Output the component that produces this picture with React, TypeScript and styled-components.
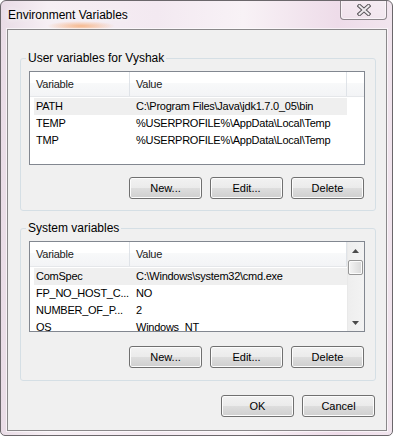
import styled, { createGlobalStyle } from "styled-components";

type VarRow = {
  name: string;
  value: string;
  selected?: boolean;
};

const userVars: VarRow[] = [
  { name: "PATH", value: "C:\\Program Files\\Java\\jdk1.7.0_05\\bin", selected: true },
  { name: "TEMP", value: "%USERPROFILE%\\AppData\\Local\\Temp" },
  { name: "TMP", value: "%USERPROFILE%\\AppData\\Local\\Temp" },
];

const systemVars: VarRow[] = [
  { name: "ComSpec", value: "C:\\Windows\\system32\\cmd.exe", selected: true },
  { name: "FP_NO_HOST_C...", value: "NO" },
  { name: "NUMBER_OF_P...", value: "2" },
  { name: "OS", value: "Windows_NT" },
];

const GlobalStyle = createGlobalStyle`
  html, body {
    margin: 0;
    padding: 0;
    background: #fff;
  }
  body {
    font-family: "Liberation Sans", Arial, sans-serif;
    font-size: 12px;
    color: #000;
  }
`;

const Window = styled.div`
  width: 393px;
  height: 436px;
  box-sizing: border-box;
  border: 1px solid #6b676b;
  border-radius: 6px 6px 5px 5px;
  display: flex;
  flex-direction: column;
  overflow: hidden;
  background:
    radial-gradient(ellipse 34px 5px at 80px 25px, rgba(247, 168, 108, 0.75), rgba(247, 168, 108, 0)),
    linear-gradient(to right, #e9dce6 0%, #f6eff4 12%, #f3e9f1 40%, #f8f2f6 62%, #eedce9 86%, #f1e5ee 100%);
`;

const TitleBar = styled.div`
  height: 28px;
  flex: none;
  display: flex;
  align-items: flex-start;
  padding: 0 5px 0 7px;
`;

const Title = styled.div`
  flex: 1;
  line-height: 28px;
  text-shadow: 0 0 6px rgba(255, 255, 255, 0.95), 0 0 10px rgba(255, 255, 255, 0.8);
`;

const CloseButton = styled.div`
  width: 47px;
  height: 20px;
  margin-top: -1px;
  box-sizing: border-box;
  border: 1px solid rgba(70, 66, 70, 0.6);
  border-top: none;
  border-radius: 0 0 4px 4px;
  box-shadow: inset 0 0 0 1px rgba(255, 255, 255, 0.55);
  background: linear-gradient(rgba(255, 255, 255, 0.35), rgba(255, 255, 255, 0.15));
  display: flex;
  align-items: center;
  justify-content: center;
`;

const Client = styled.div`
  flex: 1;
  margin: 0 5px 4px 6px;
  box-sizing: border-box;
  border: 1px solid #8a888a;
  box-shadow: 0 0 0 1px rgba(255, 255, 255, 0.6);
  background: #f0f0f0;
  padding: 20px 10px 13px 12px;
  display: flex;
  flex-direction: column;
`;

const Group = styled.fieldset<{ $bottom: number }>`
  margin: 0;
  min-width: 0;
  padding: 0 10px ${p => p.$bottom}px 8px;
  border: 1px solid #d5dfe5;
  border-radius: 3px;
`;

const GroupLabel = styled.legend`
  margin-left: -3px;
  padding: 0 2px;
  line-height: 17px;
  color: #000;
`;

const GroupSpacer = styled.div<{ $h: number }>`
  height: ${p => p.$h}px;
  flex: none;
`;

const ListView = styled.div<{ $height: number }>`
  height: ${p => p.$height}px;
  margin-top: 4px;
  box-sizing: border-box;
  border: 1px solid #828790;
  background: #fff;
  display: flex;
  overflow: hidden;
  font-size: 11px;
  letter-spacing: -0.25px;
`;

const ListBody = styled.div`
  flex: 1;
  display: flex;
  flex-direction: column;
  min-width: 0;
`;

const Header = styled.div`
  height: 25px;
  flex: none;
  display: flex;
  box-sizing: border-box;
  border-bottom: 1px solid #e5e7ea;
  background: linear-gradient(#ffffff 0%, #ffffff 45%, #f8f9fa 45%, #f3f4f6 100%);
`;

const HeaderCell = styled.div<{ $w?: number }>`
  width: ${p => (p.$w ? `${p.$w}px` : "auto")};
  flex: ${p => (p.$w ? "none" : "1")};
  box-sizing: border-box;
  padding-left: 6px;
  line-height: 24px;
  border-right: ${p => (p.$w ? "1px solid #dfe3e8" : "none")};
  color: #1b1b1b;
`;

const RowsTop = styled.div`
  height: 1px;
  flex: none;
`;

const Row = styled.div<{ $selected?: boolean }>`
  height: 17px;
  flex: none;
  width: 313px;
  margin-left: 4px;
  display: flex;
  line-height: 16px;
  background: ${p => (p.$selected ? "#efefef" : "transparent")};
`;

const Cell = styled.div<{ $w: number; $pad: number }>`
  width: ${p => p.$w}px;
  flex: none;
  box-sizing: border-box;
  padding-left: ${p => p.$pad}px;
  white-space: nowrap;
  overflow: hidden;
`;

const ScrollBar = styled.div`
  width: 17px;
  flex: none;
  display: flex;
  flex-direction: column;
  background: linear-gradient(to right, #e4e4e4 0, #eeeeee 1px, #f3f3f3 100%);
`;

const ScrollArrow = styled.div`
  height: 17px;
  flex: none;
  display: flex;
  align-items: center;
  justify-content: center;
`;

const ScrollThumb = styled.div`
  height: 15px;
  width: 15px;
  margin: 1px 0 0 1px;
  box-sizing: border-box;
  border: 1px solid #979797;
  border-radius: 2px;
  box-shadow: inset 0 0 0 1px #fbfbfb;
  background: linear-gradient(to right, #f4f4f4, #e6e6e6 50%, #d9d9d9);
`;

const ScrollTrack = styled.div`
  flex: 1;
`;

const ButtonRow = styled.div<{ $mt: number }>`
  display: flex;
  justify-content: flex-end;
  gap: 8px;
  margin-top: ${p => p.$mt}px;
  padding-right: 1px;
`;

const Button = styled.div`
  width: 73px;
  height: 22px;
  box-sizing: border-box;
  border: 1px solid #707070;
  border-radius: 3px;
  box-shadow: inset 0 0 0 1px #fcfcfc;
  background: linear-gradient(#f2f2f2 0%, #ebebeb 48%, #dddddd 52%, #cfcfcf 100%);
  display: flex;
  align-items: center;
  justify-content: center;
  font-size: 11px;
  color: #000;
`;

function CloseGlyph() {
  return (
    <svg width="14" height="12" viewBox="0 0 14 12">
      <path d="M2.5 2 L11.5 10 M11.5 2 L2.5 10" stroke="#5a565a" strokeWidth="4" strokeLinecap="square" />
      <path d="M2.5 2 L11.5 10 M11.5 2 L2.5 10" stroke="#eeeaee" strokeWidth="2" strokeLinecap="square" />
    </svg>
  );
}

function Arrow({ down }: { down?: boolean }) {
  return (
    <svg width="7" height="4" viewBox="0 0 7 4">
      <polygon points={down ? "0,0 7,0 3.5,4" : "3.5,0 7,4 0,4"} fill="#4a4a4a" />
    </svg>
  );
}

function VarList({ rows, height, scroll }: { rows: VarRow[]; height: number; scroll?: boolean }) {
  return (
    <ListView $height={height}>
      <ListBody>
        <Header>
          <HeaderCell $w={100}>Variable</HeaderCell>
          <HeaderCell $w={217}>Value</HeaderCell>
          {!scroll && <HeaderCell />}
        </Header>
        <RowsTop />
        {rows.map(r => (
          <Row key={r.name} $selected={r.selected}>
            <Cell $w={96} $pad={2}>{r.name}</Cell>
            <Cell $w={217} $pad={6}>{r.value}</Cell>
          </Row>
        ))}
      </ListBody>
      {scroll && (
        <ScrollBar>
          <ScrollArrow>
            <Arrow />
          </ScrollArrow>
          <ScrollThumb />
          <ScrollTrack />
          <ScrollArrow>
            <Arrow down />
          </ScrollArrow>
        </ScrollBar>
      )}
    </ListView>
  );
}

export default function App() {
  return (
    <>
      <GlobalStyle />
      <Window>
        <TitleBar>
          <Title>Environment Variables</Title>
          <CloseButton>
            <CloseGlyph />
          </CloseButton>
        </TitleBar>
        <Client>
          <Group $bottom={11}>
            <GroupLabel>User variables for Vyshak</GroupLabel>
            <VarList rows={userVars} height={94} />
            <ButtonRow $mt={12}>
              <Button>New...</Button>
              <Button>Edit...</Button>
              <Button>Delete</Button>
            </ButtonRow>
          </Group>
          <GroupSpacer $h={9} />
          <Group $bottom={12}>
            <GroupLabel>System variables</GroupLabel>
            <VarList rows={systemVars} height={91} scroll />
            <ButtonRow $mt={14}>
              <Button>New...</Button>
              <Button>Edit...</Button>
              <Button>Delete</Button>
            </ButtonRow>
          </Group>
          <ButtonRow $mt={14}>
            <Button>OK</Button>
            <Button>Cancel</Button>
          </ButtonRow>
        </Client>
      </Window>
    </>
  );
}
